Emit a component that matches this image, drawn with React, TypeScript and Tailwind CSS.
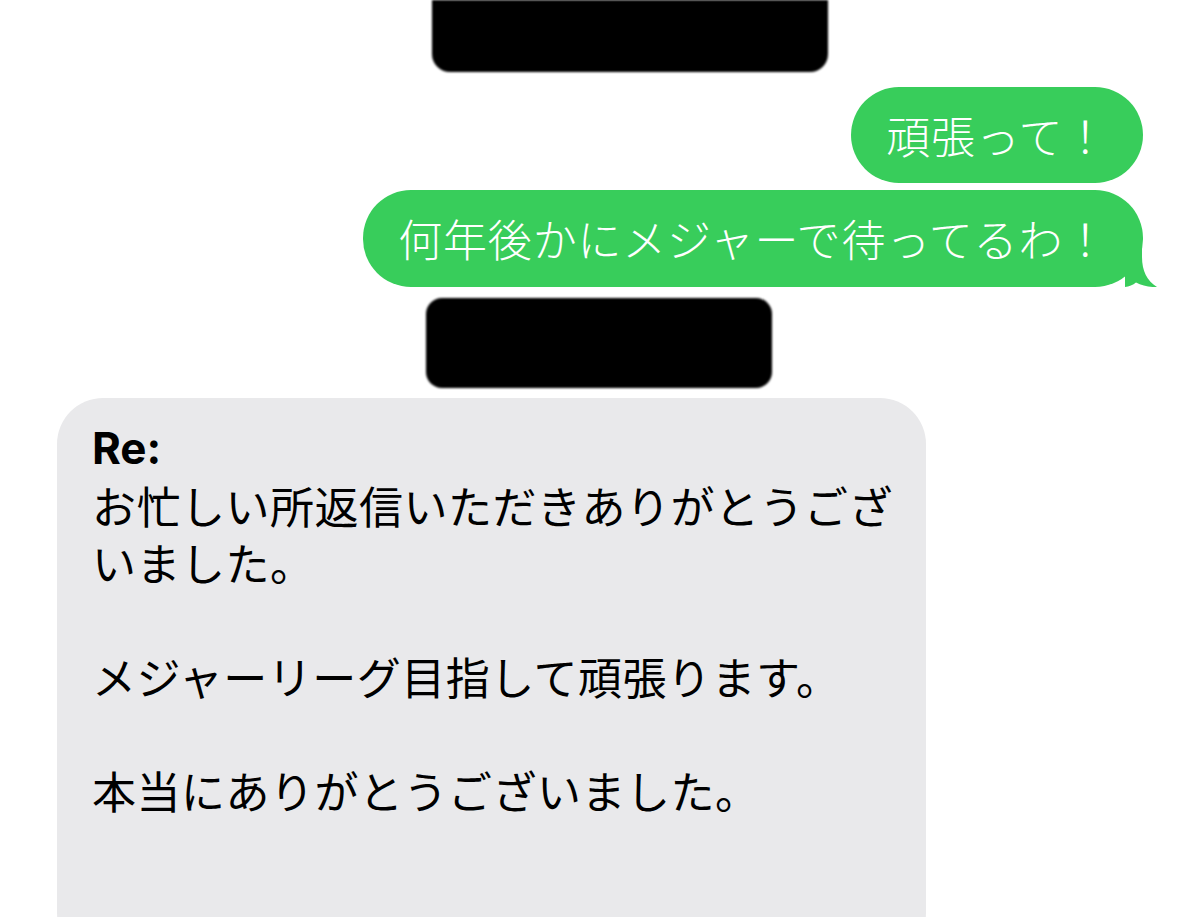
const jp = "font-['Noto_Sans_CJK_JP','Inter',sans-serif]";

function Redaction({ className }: { className: string }) {
  return <div className={`bg-black blur-[1.2px] ${className}`} />;
}

function Tail() {
  return (
    <svg
      className="absolute -right-[14px] bottom-0 h-[44px] w-[32px]"
      viewBox="0 0 32 44"
      fill="#38cd5b"
    >
      <path d="M0 0 H17 V14 C17 28 22 38 32 44 C25 44.5 17 42.5 11 39.5 C8 42 4 43.5 0 44 Z" />
    </svg>
  );
}

export default function App() {
  return (
    <main className={`min-h-[917px] overflow-hidden bg-white px-[57px] ${jp}`}>
      <Redaction className="ml-[375px] h-[72px] w-[396px] rounded-b-[18px]" />

      <div className="mt-[15px] flex flex-col items-end gap-[7px] font-light tracking-[0.8px]">
        <div className="rounded-[48px] bg-[#38cd5b] px-[35px] py-[20px] text-[44px] leading-[56px] text-white">
          頑張って！
        </div>
        <div className="relative rounded-[48px] bg-[#38cd5b] px-[35px] py-[20px] text-[44px] leading-[57px] text-white">
          何年後かにメジャーで待ってるわ！
          <Tail />
        </div>
      </div>

      <Redaction className="ml-[369px] mt-[11px] h-[90px] w-[346px] rounded-[16px]" />

      <div className="mt-[10px] w-[869px] whitespace-nowrap rounded-[46px] bg-[#e9e9eb] px-[35px] pb-[140px] pt-[22px] text-[44px] leading-[57px] tracking-[0.5px] text-black">
        <p className="font-['Inter',sans-serif] font-bold tracking-normal">Re:</p>
        <p>お忙しい所返信いただきありがとうござ</p>
        <p>いました。</p>
        <p className="h-[57px]" />
        <p>メジャーリーグ目指して頑張ります。</p>
        <p className="h-[57px]" />
        <p>本当にありがとうございました。</p>
      </div>
    </main>
  );
}
